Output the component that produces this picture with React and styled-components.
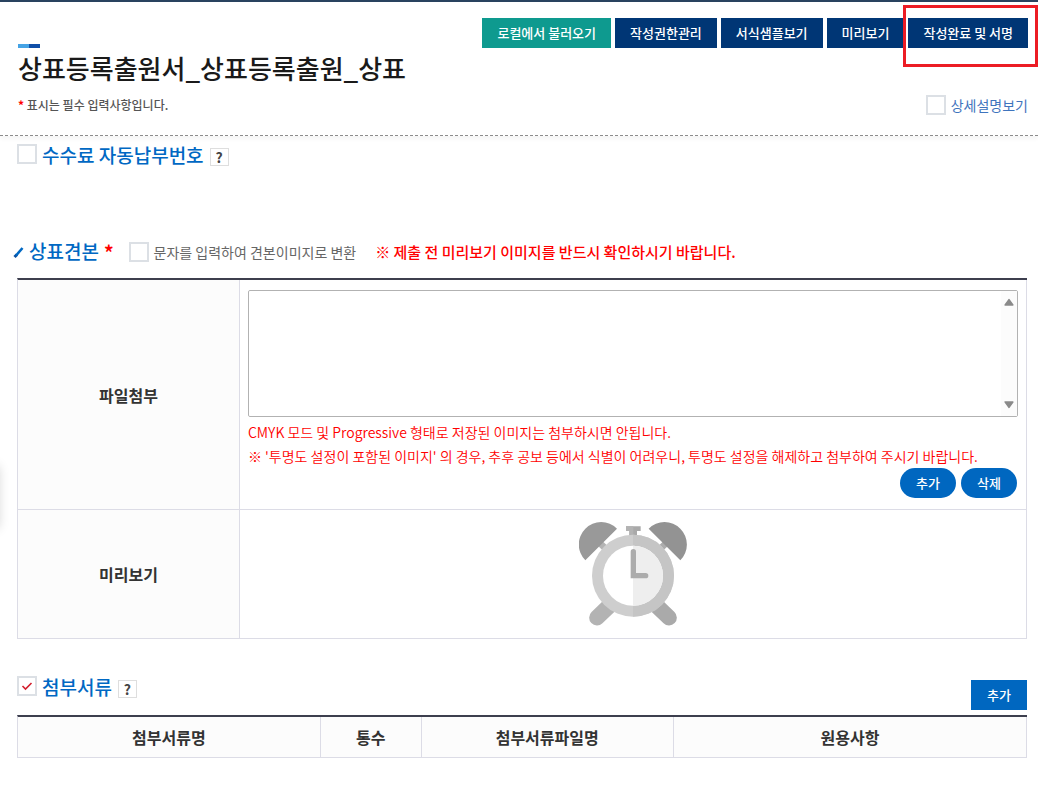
import React, { useState } from 'react';
import styled, { createGlobalStyle } from 'styled-components';

const GlobalStyle = createGlobalStyle`
  *,
  *::before,
  *::after {
    box-sizing: border-box;
  }
  body {
    margin: 0;
    background-color: #fff;
    color: #333;
    font-family: 'Noto Sans CJK KR', 'Noto Sans', sans-serif;
    font-size: 14px;
  }
  button,
  select,
  input {
    margin: 0;
    font-family: inherit;
  }
`;

const PageStyle = styled.div`
  position: relative;
  margin-right: 2px;
  overflow-x: clip;
  border-top: 2px solid #29435f;
`;

const SideShadow = styled.div`
  position: absolute;
  top: 464px;
  left: -12px;
  width: 10px;
  height: 62px;
  box-shadow: 0 0 12px rgba(0, 0, 0, 0.2);
`;

const HeaderStyle = styled.header`
  display: flex;
  justify-content: space-between;
  padding: 16px 10px 20px 18px;
  border-bottom: 1px dashed #8c8c8c;
  box-shadow: 0 3px 4px rgba(0, 0, 0, 0.04);
  .header__left {
    padding-top: 26px;
  }
  .header__right {
    display: flex;
    flex-direction: column;
    justify-content: space-between;
    align-items: flex-end;
  }
`;

const Accent = styled.div`
  width: 22px;
  height: 4px;
  background: linear-gradient(to right, #45a3e5 50%, #0f4fa8 50%);
`;

const PageTitle = styled.h1`
  margin: 0 0 7px;
  font-size: 26px;
  font-weight: 500;
  line-height: 40px;
  color: #1a1a1a;
`;

const Required = styled.span`
  color: #f00;
  font-weight: 700;
`;

const Notice = styled.p`
  margin: 0;
  font-size: 12px;
  font-weight: 500;
  line-height: 20px;
  color: #555;
`;

const Toolbar = styled.div`
  display: flex;
  gap: 4px;
`;

const ToolButton = styled.button`
  height: 30px;
  padding: 0 15px;
  border: 0;
  background-color: ${({ $teal }) => ($teal ? '#0e9a8f' : '#003675')};
  color: #fff;
  font-size: 13px;
  font-weight: 500;
  line-height: 30px;
  white-space: nowrap;
  cursor: pointer;
`;

const Highlight = styled.div`
  position: relative;
  &::after {
    position: absolute;
    content: '';
    top: -13px;
    right: -10px;
    bottom: -19px;
    left: -5px;
    border: 3px solid #ec1c24;
    pointer-events: none;
  }
`;

const CheckLabel = styled.label`
  display: flex;
  align-items: center;
  gap: 5px;
  font-size: 14px;
  line-height: 20px;
  color: ${({ $color }) => $color || '#666'};
`;

const CheckStyle = styled.span`
  display: grid;
  flex: none;
  place-items: center;
  align-self: flex-start;
  input {
    grid-area: 1 / 1;
    width: 20px;
    height: 20px;
    appearance: none;
    border: 2px solid #dce0e5;
    background-color: #fff;
  }
  svg {
    grid-area: 1 / 1;
    pointer-events: none;
  }
`;

const Section = styled.section`
  padding: 0 11px 0 17px;
  margin-top: ${({ $top }) => $top}px;
`;

const SectionHead = styled.div`
  display: flex;
  justify-content: space-between;
`;

const HeadGroup = styled.div`
  display: flex;
  align-items: flex-start;
  height: 22px;
  .head__label {
    display: flex;
    gap: 5px;
  }
`;

const SectionTitle = styled.h2`
  margin: 0;
  font-size: 19px;
  font-weight: 500;
  line-height: 22px;
  color: #0068c3;
`;

const HelpButton = styled.button`
  align-self: flex-end;
  width: 19px;
  height: 18px;
  margin-left: 6px;
  padding: 0;
  border: 1px solid #dedede;
  background-color: #fff;
  color: #444;
  font-size: 14px;
  font-weight: 700;
  line-height: 16px;
`;

const SampleHead = styled.div`
  display: flex;
  align-items: center;
  height: 28px;
  margin-left: -4px;
  margin-bottom: 12px;
  svg {
    margin-right: 5px;
  }
  ${SectionTitle} {
    padding-bottom: 2px;
  }
  ${Required} {
    margin: 0 15px 0 5px;
    font-size: 19px;
    line-height: 22px;
  }
`;

const Warning = styled.strong`
  margin-left: 19px;
  font-size: 15px;
  font-weight: 500;
  line-height: 22px;
  color: #f00;
`;

const Table = styled.table`
  width: 100%;
  table-layout: fixed;
  border-collapse: separate;
  border-spacing: 0;
  border-top: 2px solid #3d3f4e;
  border-left: 1px solid #dcdce6;
  th,
  td {
    border-right: 1px solid #dcdce6;
    border-bottom: 1px solid #dcdce6;
  }
  th {
    height: 41px;
    padding: 0;
    background-color: #fcfcfc;
    font-size: 16px;
    font-weight: 700;
    line-height: 24px;
    color: #333;
  }
  td {
    padding: 10px 8px 11px;
  }
`;

const FileBox = styled.div`
  display: flex;
  height: 127px;
  margin-bottom: 3px;
  border: 1px solid #b2b2b2;
  border-radius: 2px;
  select {
    flex: 1;
    min-width: 0;
    border: 0;
    outline: 0;
    background-color: #fff;
    scrollbar-width: none;
  }
`;

const ScrollTrack = styled.div`
  display: flex;
  flex-direction: column;
  justify-content: space-between;
  align-items: center;
  width: 16px;
  padding: 7px 0;
  background-color: #fcfcfc;
`;

const FileNote = styled.p`
  margin: 0;
  font-size: 14px;
  font-weight: 350;
  line-height: 24px;
  color: #f00;
`;

const FileActions = styled.div`
  display: flex;
  justify-content: flex-end;
  gap: 5px;
  padding-right: 1px;
`;

const ActionButton = styled.button`
  width: 56px;
  height: 30px;
  padding: 0;
  border: 0;
  border-radius: ${({ $round }) => ($round ? '15px' : '0')};
  background-color: #0067c0;
  color: #fff;
  font-size: 13px;
  font-weight: 500;
  line-height: 30px;
  cursor: pointer;
`;

const AttachHead = styled(SectionHead)`
  height: 34px;
  margin-bottom: 5px;
  align-items: flex-start;
  ${ActionButton} {
    align-self: flex-end;
  }
`;

const Preview = styled.div`
  display: flex;
  justify-content: center;
  align-items: center;
  height: 107px;
`;

function CheckBox({ id, defaultChecked = false }) {
  const [checked, setChecked] = useState(defaultChecked);
  return (
    <CheckStyle>
      <input
        id={id}
        type="checkbox"
        checked={checked}
        onChange={(e) => setChecked(e.target.checked)}
      />
      {checked && (
        <svg width="12" height="10" viewBox="0 0 12 10" fill="none">
          <path d="M1.5 5 L4.5 8 L10.5 2" stroke="#d3202f" strokeWidth="1.6" />
        </svg>
      )}
    </CheckStyle>
  );
}

function Arrow({ down }) {
  return (
    <svg width="10" height="8" viewBox="0 0 10 8">
      <path
        d={
          down
            ? 'M1.2 1 H8.8 L5 6.4 Z'
            : 'M1.2 7 H8.8 L5 1.6 Z'
        }
        fill="#8a8a8a"
        stroke="#8a8a8a"
        strokeWidth="1.6"
        strokeLinejoin="round"
      />
    </svg>
  );
}

function AlarmClock() {
  return (
    <svg width="108" height="104" viewBox="54 35 324 312" fill="none">
      <path d="M118 100 L150 130" stroke="#b4b4b4" strokeWidth="20" />
      <path d="M314 100 L282 130" stroke="#acacac" strokeWidth="20" />
      <path d="M73 150 A67 67 0 0 1 168 55 Z" fill="#999" />
      <path d="M263 55 A67 67 0 0 1 358 150 Z" fill="#939393" />
      <path d="M108 322 L160 272" stroke="#b3b3b3" strokeWidth="47" strokeLinecap="round" />
      <path d="M324 322 L272 272" stroke="#aaa" strokeWidth="47" strokeLinecap="round" />
      <path d="M195 48 H239 V62 H228 V80 H205 V62 H195 Z" fill="#a9a9a9" />
      <path d="M195 48 H217 V80 H205 V62 H195 Z" fill="#b3b3b3" />
      <circle cx="216" cy="196" r="123" fill="#cecece" />
      <path d="M216 73 A123 123 0 0 1 216 319 Z" fill="#c5c5c5" />
      <circle cx="216" cy="196" r="90" fill="#fff" />
      <path d="M216 106 A90 90 0 0 1 216 286 Z" fill="#eee" />
      <path
        d="M217 124 V196 H254"
        stroke="#acacac"
        strokeWidth="16"
        strokeLinecap="round"
      />
    </svg>
  );
}

export default function App() {
  return (
    <PageStyle>
      <GlobalStyle />
      <SideShadow />
      <HeaderStyle>
        <div className="header__left">
          <Accent />
          <PageTitle>상표등록출원서_상표등록출원_상표</PageTitle>
          <Notice>
            <Required>*</Required> 표시는 필수 입력사항입니다.
          </Notice>
        </div>
        <div className="header__right">
          <Toolbar>
            <ToolButton type="button" $teal>로컬에서 불러오기</ToolButton>
            <ToolButton type="button">작성권한관리</ToolButton>
            <ToolButton type="button">서식샘플보기</ToolButton>
            <ToolButton type="button">미리보기</ToolButton>
            <Highlight>
              <ToolButton type="button">작성완료 및 서명</ToolButton>
            </Highlight>
          </Toolbar>
          <CheckLabel htmlFor="detail" $color="#3f74bd">
            <CheckBox id="detail" />
            상세설명보기
          </CheckLabel>
        </div>
      </HeaderStyle>

      <Section $top={8}>
        <HeadGroup>
          <label className="head__label" htmlFor="autopay">
            <CheckBox id="autopay" />
            <SectionTitle>수수료 자동납부번호</SectionTitle>
          </label>
          <HelpButton type="button">?</HelpButton>
        </HeadGroup>
      </Section>

      <Section $top={72}>
        <SampleHead>
          <svg width="11" height="13" viewBox="0 0 11 13" fill="none">
            <path d="M1.5 11 L4 8.5" stroke="#0b4fa0" strokeWidth="3" />
            <path d="M3 9.5 L9.5 2" stroke="#0068c3" strokeWidth="2.6" />
          </svg>
          <SectionTitle>상표견본</SectionTitle>
          <Required>*</Required>
          <CheckLabel htmlFor="convert">
            <CheckBox id="convert" />
            문자를 입력하여 견본이미지로 변환
          </CheckLabel>
          <Warning>※ 제출 전 미리보기 이미지를 반드시 확인하시기 바랍니다.</Warning>
        </SampleHead>
        <Table>
          <colgroup>
            <col style={{ width: '22%' }} />
            <col />
          </colgroup>
          <tbody>
            <tr>
              <th scope="row">
                <label htmlFor="files">파일첨부</label>
              </th>
              <td>
                <FileBox>
                  <select id="files" multiple />
                  <ScrollTrack>
                    <Arrow />
                    <Arrow down />
                  </ScrollTrack>
                </FileBox>
                <FileNote>
                  CMYK 모드 및 Progressive 형태로 저장된 이미지는 첨부하시면 안됩니다.
                </FileNote>
                <FileNote>
                  ※ '투명도 설정이 포함된 이미지' 의 경우, 추후 공보 등에서 식별이 어려우니, 투명도 설정을 해제하고 첨부하여 주시기 바랍니다.
                </FileNote>
                <FileActions>
                  <ActionButton type="button" $round>추가</ActionButton>
                  <ActionButton type="button" $round>삭제</ActionButton>
                </FileActions>
              </td>
            </tr>
            <tr>
              <th scope="row">미리보기</th>
              <td>
                <Preview>
                  <AlarmClock />
                </Preview>
              </td>
            </tr>
          </tbody>
        </Table>
      </Section>

      <Section $top={37}>
        <AttachHead>
          <HeadGroup>
            <label className="head__label" htmlFor="attach">
              <CheckBox id="attach" defaultChecked />
              <SectionTitle>첨부서류</SectionTitle>
            </label>
            <HelpButton type="button">?</HelpButton>
          </HeadGroup>
          <ActionButton type="button">추가</ActionButton>
        </AttachHead>
        <Table>
          <colgroup>
            <col style={{ width: '30%' }} />
            <col style={{ width: '10%' }} />
            <col style={{ width: '25%' }} />
            <col style={{ width: '35%' }} />
          </colgroup>
          <thead>
            <tr>
              <th scope="col">첨부서류명</th>
              <th scope="col">통수</th>
              <th scope="col">첨부서류파일명</th>
              <th scope="col">원용사항</th>
            </tr>
          </thead>
        </Table>
      </Section>
    </PageStyle>
  );
}
